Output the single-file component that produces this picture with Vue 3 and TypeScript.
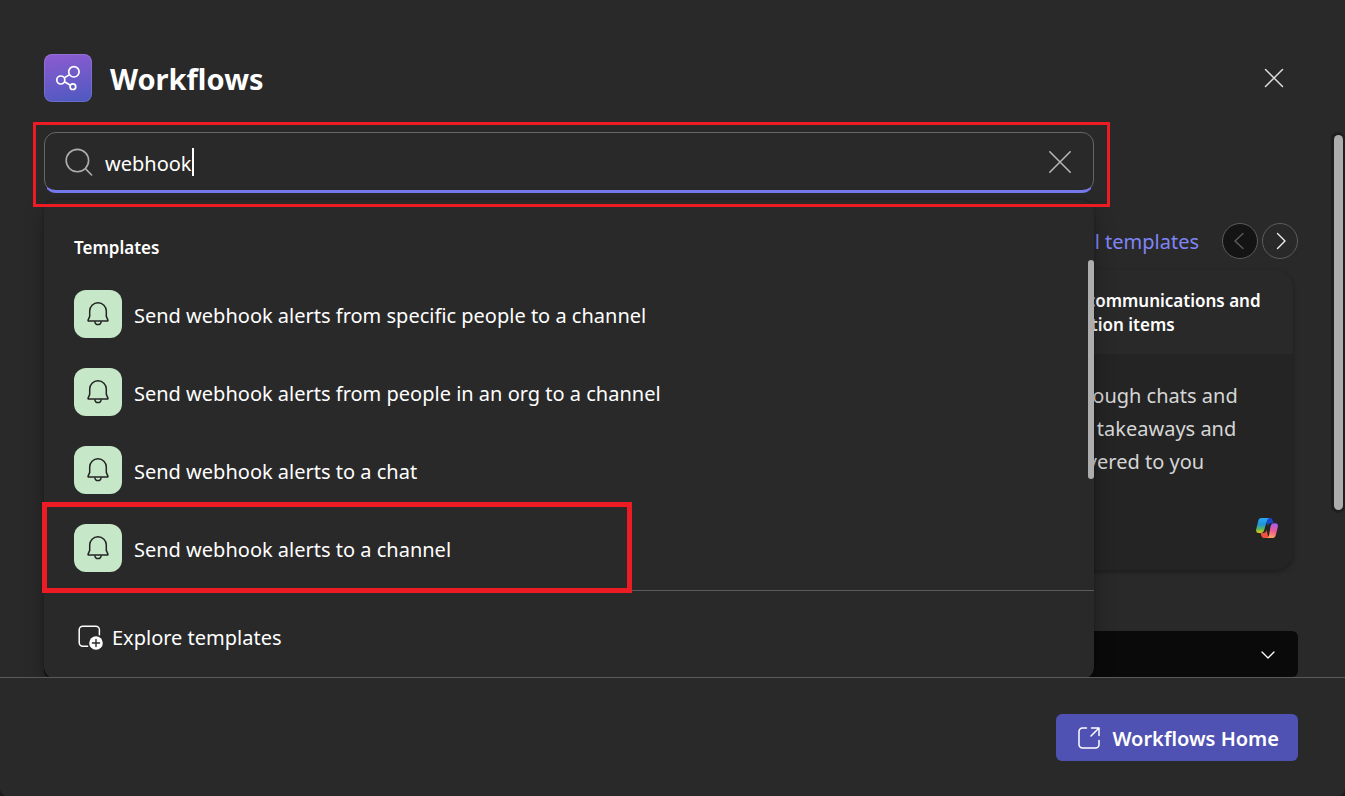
<script setup lang="ts">
import { ref } from 'vue'

interface Template {
  id: number
  name: string
  marked: boolean
}

const query = ref<string>('webhook')
const category = ref<string>('')

const templates: Template[] = [
  { id: 1, name: 'Send webhook alerts from specific people to a channel', marked: false },
  { id: 2, name: 'Send webhook alerts from people in an org to a channel', marked: false },
  { id: 3, name: 'Send webhook alerts to a chat', marked: false },
  { id: 4, name: 'Send webhook alerts to a channel', marked: true },
]
</script>

<template>
  <div class="dialog">
    <header class="header">
      <span class="logo">
        <svg width="48" height="48" viewBox="0 0 48 48" fill="none" stroke="#fff" stroke-width="1.7" aria-hidden="true">
          <circle cx="29.9" cy="17.8" r="5.2" />
          <circle cx="16.8" cy="26" r="4" />
          <circle cx="28.9" cy="32.7" r="2.8" />
          <path d="M20.2 23.9l5.3-3.3M20.4 27.8l6 3.4" />
        </svg>
      </span>
      <h1 class="title">Workflows</h1>
      <button class="icon-button close" type="button" aria-label="Close">
        <svg width="20" height="20" viewBox="0 0 20 20" fill="none" stroke="#dedede" stroke-width="1.5" stroke-linecap="round">
          <path d="M1.5 1.5l17 17M18.5 1.5l-17 17" />
        </svg>
      </button>
    </header>

    <main class="body">
      <div class="search-area">
        <label class="search">
          <svg width="28" height="28" viewBox="0 0 28 28" fill="none" stroke="#adadad" stroke-width="1.6" stroke-linecap="round" aria-hidden="true">
            <circle cx="12.4" cy="12.6" r="11.2" />
            <path d="M20.4 20.6l6.2 6.4" />
          </svg>
          <input v-model="query" class="search-input" type="text" aria-label="Search workflows" />
          <span class="caret"></span>
          <button class="icon-button clear" type="button" aria-label="Clear search" @click="query = ''">
            <svg width="24" height="24" viewBox="0 0 24 24" fill="none" stroke="#b4b4b4" stroke-width="1.6" stroke-linecap="round">
              <path d="M1.8 1.8l20.4 20.4M22.2 1.8L1.8 22.2" />
            </svg>
          </button>
        </label>

        <section class="results">
          <h2 class="results-title">Templates</h2>
          <ul class="results-list">
            <li v-for="item in templates" :key="item.id" :class="['result', { marked: item.marked }]">
              <button class="result-button" type="button">
                <span class="bell">
                  <svg width="48" height="48" viewBox="0 0 48 48" fill="none" stroke="#242424" stroke-width="1.5" stroke-linejoin="round" aria-hidden="true">
                    <path d="M24 12.8c-4.7 0-8.3 3.6-8.3 8.3v5.3l-1.6 3.7c-.2.5.1.9.6.9h18.6c.5 0 .8-.4.6-.9l-1.6-3.7v-5.3c0-4.7-3.6-8.3-8.3-8.3z" />
                    <path d="M20.9 31.2c0 2 1.3 3.4 3.1 3.4s3.1-1.4 3.1-3.4" />
                  </svg>
                </span>
                <span class="label">{{ item.name }}</span>
              </button>
            </li>
          </ul>
          <button class="explore" type="button">
            <svg width="26" height="26" viewBox="0 0 26 26" fill="none" aria-hidden="true">
              <path d="M9.600 21.200H4.800a3.600 3.600 0 0 1-3.600-3.600V4.800a3.600 3.600 0 0 1 3.600-3.600h13a3.600 3.600 0 0 1 3.600 3.600v5" stroke="#fff" stroke-width="1.5" stroke-linecap="round" />
              <circle cx="18" cy="18" r="6.8" fill="#fff" />
              <path d="M18 14.400v7.200M14.400 18h7.200" stroke="#292929" stroke-width="1.4" stroke-linecap="round" />
            </svg>
            <span>Explore templates</span>
          </button>
          <span class="thumb results-thumb"></span>
        </section>
        <span class="search-mark"></span>
      </div>

      <div class="carousel-head">
        <a class="all-link" href="#">All templates</a>
        <button class="round previous" type="button" aria-label="Previous" disabled>
          <svg width="18" height="18" viewBox="0 0 18 18" fill="none" stroke="#5c5c5c" stroke-width="1.4" stroke-linecap="round" stroke-linejoin="round"><path d="M12 1.500L4 9l8 7.500" /></svg>
        </button>
        <button class="round" type="button" aria-label="Next">
          <svg width="18" height="18" viewBox="0 0 18 18" fill="none" stroke="#f0f0f0" stroke-width="1.4" stroke-linecap="round" stroke-linejoin="round"><path d="M6.500 1.500L14 9l-7.500 7.500" /></svg>
        </button>
      </div>

      <article class="card">
        <h3 class="card-title">View communications and<br />list action items</h3>
        <div class="card-body">
          <p class="card-text">Go through chats and<br />so key takeaways and<br />is delivered to you</p>
          <svg class="copilot" width="22" height="20" viewBox="0 0 22 20" aria-hidden="true">
            <defs>
              <linearGradient id="cool" x1="0" y1="0" x2="0" y2="1">
                <stop offset="0" stop-color="#29a8f5" />
                <stop offset=".45" stop-color="#1f95d6" />
                <stop offset=".75" stop-color="#5fb955" />
                <stop offset="1" stop-color="#f2c613" />
              </linearGradient>
              <linearGradient id="warm" x1="0.6" y1="0" x2="0.400" y2="1">
                <stop offset="0" stop-color="#a45cf2" />
                <stop offset=".5" stop-color="#ee5a92" />
                <stop offset="1" stop-color="#ffa45c" />
              </linearGradient>
            </defs>
            <path d="M9.500 0h4.700c1.400 0 2 .9 2.400 2.200l.9 3h-2.300c-2.200 0-3 1-3.500 2.800z" fill="#1846c8" />
            <path d="M12.500 20H8c-1.600 0-2.200-1-2.600-2.200L4.600 15h2.600c2 0 2.800-1.200 3.300-3z" fill="#ee513c" />
            <path d="M5.300 0h8.300c-1.500.2-2.200 1.300-2.700 3L8.200 12c-.6 2-1.600 3-3.500 3H2.700C.6 15-.3 13.400.2 11.200L2.200 3C2.700 1 3.700 0 5.300 0z" fill="url(#cool)" />
            <path d="M16.700 20H10.400c1.500-.2 2.200-1.300 2.700-3l1.500-8.800c.6-2 1.600-3 3.500-3h1.200c2.100 0 3 1.600 2.500 3.800l-2 8c-.5 2-1.500 3-3.100 3z" fill="url(#warm)" />
          </svg>
        </div>
      </article>

      <div class="filter">
        <select v-model="category" class="filter-select" aria-label="Category">
          <option value=""></option>
        </select>
        <svg class="chevron" width="14" height="8" viewBox="0 0 14 8" fill="none" stroke="#fff" stroke-width="1.3" stroke-linecap="round" stroke-linejoin="round" aria-hidden="true"><path d="M1 1l6 6 6-6" /></svg>
      </div>

      <span class="track"><span class="thumb"></span></span>
    </main>

    <footer class="footer">
      <button class="home" type="button">
        <svg width="22" height="22" viewBox="0 0 22 22" fill="none" stroke="#fff" stroke-width="1.5" stroke-linecap="round" stroke-linejoin="round" aria-hidden="true">
          <path d="M8.500 1H4.500A3.500 3.500 0 0 0 1 4.500v13A3.500 3.500 0 0 0 4.500 21h13a3.500 3.500 0 0 0 3.500-3.500v-4M13.500 1H21v7.500M21 1l-8 8" />
        </svg>
        <span class="label">Workflows Home</span>
      </button>
    </footer>
  </div>
</template>

<style>
body {
  margin: 0;
  background: #1c1c1c;
}
</style>

<style scoped>
.dialog {
  box-sizing: border-box;
  display: flex;
  flex-direction: column;
  min-height: 100vh;
  overflow: hidden;
  border-radius: 0 0 8px 8px;
  background: #292929;
  color: #fff;
  font-family: "Segoe UI", "Noto Sans", "Open Sans", sans-serif;
  font-size: 20px;
}

button,
input,
select {
  margin: 0;
  padding: 0;
  border: 0;
  background: none;
  color: inherit;
  font: inherit;
}

svg {
  display: block;
  flex: none;
}

.label {
  padding-top: 2px;
}

.header {
  display: flex;
  align-items: center;
  padding: 54px 61px 30px 44px;
}

.logo {
  box-sizing: border-box;
  border-radius: 8px;
  background: linear-gradient(170deg, #8a5cd0 5%, #5059c0 95%);
  box-shadow: inset 0 0 0 1px rgba(255, 255, 255, 0.12);
}

.title {
  flex: 1;
  margin: 0 0 0 18px;
  padding-top: 2px;
  font-size: 29px;
  line-height: 40px;
  font-weight: 700;
}

.icon-button {
  display: flex;
}

.body {
  position: relative;
  flex: 1;
  padding: 0 47px 0 44px;
}

.search-area {
  position: relative;
  z-index: 1;
  margin-right: 204px;
}

.search {
  box-sizing: border-box;
  position: relative;
  display: flex;
  align-items: center;
  height: 60px;
  padding: 0 21px 0 20px;
  border: 1px solid #666;
  border-radius: 12px;
}

.search::after {
  content: "";
  position: absolute;
  inset: auto -1px -2px;
  height: 12px;
  border-bottom: 3px solid #7579eb;
  border-radius: 0 0 12px 12px;
  clip-path: inset(9px 3px 0);
}

.search-input {
  field-sizing: content;
  margin-left: 12px;
  padding-top: 3px;
  line-height: 28px;
  outline: none;
}

.caret {
  width: 2px;
  height: 28px;
  background: #fff;
}

.clear {
  margin-left: auto;
}

.search-mark {
  position: absolute;
  inset: -10px -16px -15px -11px;
  border: 3px solid #ed1c24;
  pointer-events: none;
}

.results {
  box-sizing: border-box;
  position: absolute;
  top: 68px;
  left: 0;
  right: 0;
  height: 479px;
  padding-top: 36px;
  border-radius: 12px;
  background: #292929;
  box-shadow: 0 8px 20px rgba(0, 0, 0, 0.28), 0 0 3px rgba(0, 0, 0, 0.25);
}

.results-title {
  margin: 0 30px 15px;
  font-size: 17px;
  line-height: 24px;
  font-weight: 600;
}

.results-list {
  margin: 0;
  padding: 0 0 3px;
  border-bottom: 1px solid #5a5a5a;
  list-style: none;
}

.result {
  position: relative;
}

.result-button {
  display: flex;
  align-items: center;
  gap: 12px;
  width: 100%;
  padding: 15px 30px;
  text-align: left;
}

.bell {
  border-radius: 12px;
  background: #c6e7c8;
}

.marked::after {
  content: "";
  position: absolute;
  inset: -7px auto -6px -2px;
  box-sizing: border-box;
  width: 590px;
  border: 5px solid #ed1c24;
  pointer-events: none;
}

.explore {
  display: flex;
  align-items: center;
  gap: 8px;
  padding: 33px 34px;
}

.thumb {
  display: block;
  border-radius: 5px;
  background: #adadad;
}

.results-thumb {
  position: absolute;
  top: 60px;
  right: 0;
  width: 6px;
  height: 219px;
}

.carousel-head {
  display: flex;
  align-items: center;
  justify-content: flex-end;
  gap: 4px;
  margin-top: 31px;
}

.all-link {
  margin-right: 19px;
  color: #7f85f5;
  text-decoration: none;
}

.round {
  box-sizing: border-box;
  display: flex;
  align-items: center;
  justify-content: center;
  width: 36px;
  height: 36px;
  border: 1px solid #5c5c5c;
  border-radius: 50%;
}

.previous {
  background: #141414;
}

.card {
  width: 360px;
  margin: 11px 5px 0 auto;
  border-radius: 18px;
  overflow: hidden;
  background: #242424;
  box-shadow: 0 2px 5px rgba(0, 0, 0, 0.3);
}

.card-title {
  margin: 0;
  padding: 19px 0 17px 110px;
  background: #292929;
  font-size: 17px;
  line-height: 24px;
  font-weight: 600;
  white-space: nowrap;
}

.card-body {
  display: flex;
  flex-direction: column;
  gap: 40px;
  padding: 25px 15px 32px 100px;
}

.card-text {
  margin: 0;
  color: #d6d6d6;
  line-height: 33px;
  white-space: nowrap;
}

.copilot {
  align-self: flex-end;
}

.filter {
  position: relative;
  margin-top: 61px;
}

.filter-select {
  display: block;
  width: 100%;
  height: 46px;
  border-radius: 6px;
  background: #0a0a0a;
  appearance: none;
}

.chevron {
  position: absolute;
  top: 20px;
  right: 23px;
  pointer-events: none;
}

.track {
  position: absolute;
  top: 0;
  right: 0;
  padding: 3px 2px 3px 3px;
  border-radius: 7px;
  background: #1f1f1f;
}

.track .thumb {
  width: 9px;
  height: 375px;
}

.footer {
  position: relative;
  z-index: 2;
  display: flex;
  justify-content: flex-end;
  padding: 36px 47px 35px;
  border-top: 1px solid #5a5a5a;
  background: #292929;
}

.home {
  display: flex;
  align-items: center;
  gap: 12px;
  height: 47px;
  padding: 0 19px 0 22px;
  border-radius: 6px;
  background: #4f52b2;
  font-weight: 600;
}
</style>
